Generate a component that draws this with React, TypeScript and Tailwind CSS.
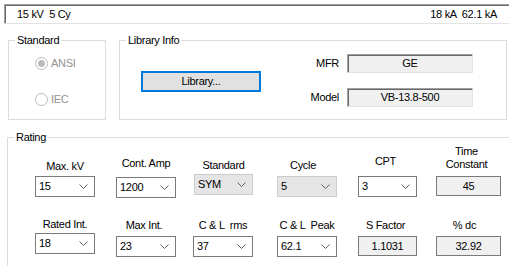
import type { ReactNode } from 'react';

const Chevron = () => (
	<svg width="9" height="5" viewBox="0 0 9 5" className="shrink-0">
		<path d="M0.5 0.5 4.5 4.5 8.5 0.5" fill="none" stroke="#606060" strokeWidth="1" />
	</svg>
);

const Combo = ({ value, disabled, width }: { value: string; disabled?: boolean; width: string }) => (
	<div
		className={`flex h-[21px] items-center justify-between border pl-[3px] pr-[6px] ${width} ${
			disabled ? 'border-[#cccccc] bg-[#e5e5e5]' : 'border-[#7a7a7a] bg-white'
		}`}
	>
		<span>{value}</span>
		<Chevron />
	</div>
);

const Field = ({ value, width }: { value: string; width: string }) => (
	<div className={`flex h-[20px] items-center justify-center border border-[#7a7a7a] bg-[#f0f0f0] ${width}`}>
		{value}
	</div>
);

const Sunken = ({ value }: { value: string }) => (
	<div className="flex h-[19px] w-[126px] items-center justify-center border border-b-[#e3e3e3] border-l-[#a0a0a0] border-r-[#e3e3e3] border-t-[#a0a0a0] bg-[#f0f0f0] shadow-[inset_1px_1px_0_#696969]">
		{value}
	</div>
);

const Group = ({ title, className, children }: { title: string; className: string; children?: ReactNode }) => (
	<div className={`relative border border-[#dcdcdc] ${className}`}>
		<span className="absolute -top-[7px] left-[6px] bg-white px-[2px] leading-[13px]">{title}</span>
		{children}
	</div>
);

const Cell = ({
	label,
	box,
	labelClass,
	children,
}: {
	label: ReactNode;
	box: string;
	labelClass: string;
	children: ReactNode;
}) => (
	<div className={`flex shrink-0 flex-col items-center ${box}`}>
		<div className={`whitespace-pre text-center ${labelClass}`}>{label}</div>
		{children}
	</div>
);

const Radio = ({ label, checked }: { label: string; checked?: boolean }) => (
	<div className="flex h-[13px] items-center gap-[3px] text-[#939393]">
		<span className="flex h-[13px] w-[13px] items-center justify-center rounded-full border border-[#bcbcbc] bg-white">
			{checked && <span className="h-[7px] w-[7px] rounded-full bg-[#bcbcbc]" />}
		</span>
		<span>{label}</span>
	</div>
);

export default function App() {
	return (
		<div className="relative h-[266px] w-[509px] overflow-hidden bg-white font-['Liberation_Sans',Arial,sans-serif] text-[11px] leading-[13px] tracking-[-0.3px] text-black">
			{/* status strip */}
			<div className="ml-[4px] mt-[4px] flex h-[20px] w-[505px] items-center justify-between whitespace-pre border-b border-l border-t border-b-[#e3e3e3] border-l-[#a0a0a0] border-t-[#a0a0a0] pl-[12px] pr-[12px] shadow-[inset_1px_1px_0_#696969]">
				<span>15 kV  5 Cy</span>
				<span>18 kA  62.1 kA</span>
			</div>

			<div className="mt-[16px] flex">
				<Group title="Standard" className="ml-[8px] h-[80px] w-[98px]">
					<div className="flex flex-col gap-[23px] pl-[26px] pt-[16px]">
						<Radio label="ANSI" checked />
						<Radio label="IEC" />
					</div>
				</Group>

				<Group title="Library Info" className="ml-[13px] flex h-[80px] w-[388px]">
					<button
						type="button"
						className="ml-[21px] mt-[30px] h-[21px] w-[120px] border-2 border-[#0078d7] bg-[#e1e1e1]"
					>
						Library...
					</button>
					<div className="ml-[39px] mt-[13px] grid grid-cols-[39px_126px] items-center gap-x-[8px] gap-y-[15px] self-start">
						<span className="text-right">MFR</span>
						<Sunken value="GE" />
						<span className="text-right">Model</span>
						<Sunken value="VB-13.8-500" />
					</div>
				</Group>
			</div>

			<Group title="Rating" className="ml-[7px] mt-[17px] h-[140px] w-[520px]">
				<div className="flex h-[60px] items-start">
					<Cell label="Max. kV" box="ml-[27px] w-[60px]" labelClass="mt-[22px] mb-[3px]">
						<Combo value="15" width="w-[60px]" />
					</Cell>
					<Cell label="Cont. Amp" box="ml-[21px] w-[60px]" labelClass="mt-[19px] mb-[7px]">
						<Combo value="1200" width="w-[60px]" />
					</Cell>
					<Cell label="Standard" box="ml-[18px] w-[59px]" labelClass="mt-[21px] mb-[2px]">
						<Combo value="SYM" width="w-[59px]" disabled />
					</Cell>
					<Cell label="Cycle" box="ml-[24px] w-[60px]" labelClass="mt-[21px] mb-[4px] mr-[8px]">
						<Combo value="5" width="w-[60px]" disabled />
					</Cell>
					<Cell label="CPT" box="ml-[21px] w-[59px]" labelClass="mt-[17px] mb-[8px] mr-[4px]">
						<Combo value="3" width="w-[59px]" />
					</Cell>
					<Cell label={'Time\nConstant'} box="ml-[19px] w-[65px]" labelClass="mt-[7px] mb-[5px] mr-[4px]">
						<Field value="45" width="w-[65px]" />
					</Cell>
				</div>

				<div className="flex items-start">
					<Cell label="Rated Int." box="ml-[27px] w-[60px]" labelClass="mt-[20px] mb-[2px]">
						<Combo value="18" width="w-[60px]" />
					</Cell>
					<Cell label="Max Int." box="ml-[21px] w-[60px]" labelClass="mt-[21px] mb-[4px] mr-[4px]">
						<Combo value="23" width="w-[60px]" />
					</Cell>
					<Cell label="C & L  rms" box="ml-[17px] w-[60px]" labelClass="mt-[21px] mb-[4px]">
						<Combo value="37" width="w-[60px]" />
					</Cell>
					<Cell label="C & L  Peak" box="ml-[24px] w-[60px]" labelClass="mt-[21px] mb-[4px]">
						<Combo value="62.1" width="w-[60px]" />
					</Cell>
					<Cell label="S Factor" box="ml-[21px] w-[59px]" labelClass="mt-[21px] mb-[4px] mr-[4px]">
						<Field value="1.1031" width="w-[59px]" />
					</Cell>
					<Cell label="% dc" box="ml-[19px] w-[65px]" labelClass="mt-[21px] mb-[4px] mr-[8px]">
						<Field value="32.92" width="w-[65px]" />
					</Cell>
				</div>
			</Group>
		</div>
	);
}
